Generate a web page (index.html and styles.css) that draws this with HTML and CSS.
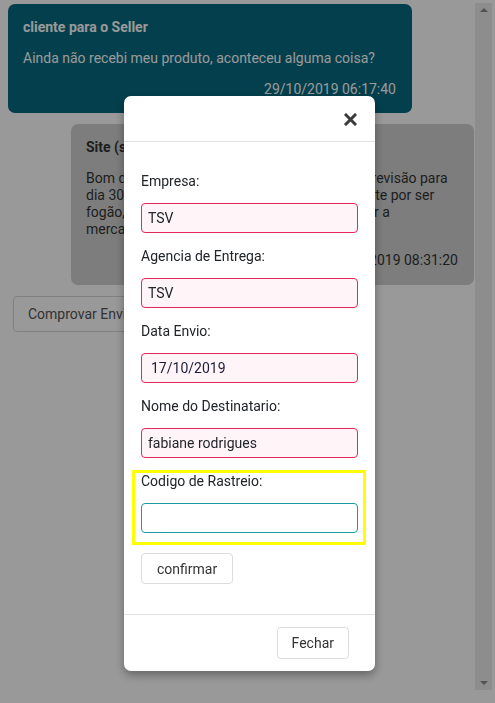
FILE: index.html
```html
<!DOCTYPE html>
<html lang="pt-BR">
<head>
  <meta charset="UTF-8">
  <meta name="viewport" content="width=device-width, initial-scale=1">
  <title>Mensagens do pedido</title>
  <link rel="stylesheet" href="styles.css">
</head>
<body>
  <div class="tela">
    <div class="chat">
      <div class="msg msg-cliente">
        <div class="msg-autor">cliente para o Seller</div>
        <p class="msg-texto">Ainda não recebi meu produto, aconteceu alguma coisa?</p>
        <div class="msg-data">29/10/2019 06:17:40</div>
      </div>

      <div class="msg msg-site">
        <div class="msg-autor">Site (seller)</div>
        <p class="msg-texto">Bom dia, o seu pedido já está com a data de previsão para<br>
          dia 30/10/2019, e a entrega é um tanto diferente por ser<br>
          fogão, pedimos que aguarde mais para receber a<br>
          mercadoria.</p>
        <div class="msg-data">30/10/2019 08:31:20</div>
      </div>

      <button class="btn-comprovar">Comprovar Envio</button>
    </div>

    <!-- barra de rolagem da lista -->
    <div class="scroll-track">
      <span class="seta seta-cima"></span>
      <span class="seta seta-baixo"></span>
    </div>
  </div>

  <!-- fundo escuro do modal -->
  <div class="backdrop"></div>

  <div class="modal">
    <div class="modal-header">
      <button class="btn-close" title="Fechar">
        <svg width="13" height="13" viewBox="0 0 13 13">
          <path d="M2 2 L11 11 M11 2 L2 11" stroke="#3b3b3b" stroke-width="3" stroke-linecap="square"/>
        </svg>
      </button>
    </div>

    <div class="modal-body">
      <div class="form-group">
        <label for="empresa">Empresa:</label>
        <input type="text" id="empresa" class="campo invalido" value="TSV">
      </div>
      <div class="form-group">
        <label for="agencia">Agencia de Entrega:</label>
        <input type="text" id="agencia" class="campo invalido" value="TSV">
      </div>
      <div class="form-group">
        <label for="data-envio">Data Envio:</label>
        <input type="text" id="data-envio" class="campo invalido campo-data" value="17/10/2019">
      </div>
      <div class="form-group">
        <label for="destinatario">Nome do Destinatario:</label>
        <input type="text" id="destinatario" class="campo invalido" value="fabiane rodrigues">
      </div>
      <div class="form-group destaque">
        <label for="rastreio">Codigo de Rastreio:</label>
        <input type="text" id="rastreio" class="campo foco">
      </div>

      <button class="btn-confirmar">confirmar</button>
    </div>

    <div class="modal-footer">
      <button class="btn-fechar">Fechar</button>
    </div>
  </div>
</body>
</html>
```

FILE: styles.css
```css
body {
  margin: 0;
  font-family: Roboto, "Liberation Sans", Arial, sans-serif;
  font-size: 14px;
  color: #212529;
  background-color: #fff;
}

.tela {
  display: flex;
  padding-top: 3px;
}

.chat {
  width: 475px;
  height: 687px;
  padding: 1px 1px 0 8px;
  box-sizing: border-box;
  overflow: hidden;
}

.scroll-track {
  width: 17px;
  height: 687px;
  background-color: #ebebeb;
  display: flex;
  flex-direction: column;
  justify-content: space-between;
  align-items: center;
  padding: 5px 0 5px;
  box-sizing: border-box;
}

.seta {
  width: 0;
  height: 0;
  border-left: 4px solid transparent;
  border-right: 4px solid transparent;
}

.seta-cima {
  border-bottom: 4px solid #8a8a8a;
}

.seta-baixo {
  border-top: 4px solid #8a8a8a;
}

.msg {
  width: 404px;
  box-sizing: border-box;
  padding: 15px 16px 15px 15px;
  border-radius: 7px;
  line-height: 17px;
  margin-bottom: 11px;
}

.msg-cliente {
  background-color: #056a80;
  color: #fff;
}

.msg-site {
  background-color: #d1d1d1;
  color: #333;
  margin-left: auto;
  width: 403px;
  padding-bottom: 16px;
}

.msg-autor {
  font-weight: bold;
}

.msg-texto {
  margin: 14px 0 14px;
}

.msg-data {
  text-align: right;
}

.btn-comprovar {
  display: block;
  height: 36px;
  margin: 5px 0 0 5px;
  padding: 0 14px;
  font-family: inherit;
  font-size: 14px;
  color: #555;
  background: #fff;
  border: 1px solid #d6d6d6;
  border-radius: 4px;
}

.backdrop {
  position: fixed;
  inset: 0;
  background-color: rgba(0, 0, 0, 0.4);
}

.modal {
  position: fixed;
  top: 96px;
  left: 124px;
  width: 251px;
  background: #fff;
  border-radius: 7px;
  box-shadow: 0 4px 10px rgba(0, 0, 0, 0.35);
}

.modal-header {
  height: 45px;
  border-bottom: 1px solid #dee2e6;
  display: flex;
  justify-content: flex-end;
  align-items: center;
  padding: 0 18px 0 0;
}

.btn-close {
  background: none;
  border: none;
  padding: 0;
  width: 13px;
  height: 13px;
  margin-top: 1px;
  cursor: pointer;
}

.btn-close svg {
  display: block;
}

.modal-body {
  padding: 29px 17px 30px;
}

.form-group {
  margin-bottom: 13px;
}

.form-group label {
  display: block;
  line-height: 20px;
  margin-bottom: 12px;
}

.campo {
  display: block;
  width: 100%;
  height: 30px;
  box-sizing: border-box;
  padding: 0 6px;
  font-family: inherit;
  font-size: 14px;
  color: #212529;
  border: 1px solid #ccc;
  border-radius: 4px;
  background: #fff;
  outline: none;
}

.campo.invalido {
  border-color: #e5285a;
  background-color: #fff5f8;
}

.campo-data {
  padding-left: 9px;
  color: #1c1c3a;
}

.campo.foco {
  border-color: #1b9aa0;
}

.destaque {
  position: relative;
  margin-bottom: 20px;
}

/* marcação amarela em volta do campo */
.destaque::after {
  content: "";
  position: absolute;
  left: -9px;
  right: -8px;
  top: -1px;
  bottom: -12px;
  border: 3px solid #ffff00;
  pointer-events: none;
}

.btn-confirmar,
.btn-fechar {
  font-family: inherit;
  font-size: 14px;
  color: #333;
  background: #fff;
  border: 1px solid #dcdcdc;
  border-radius: 4px;
  cursor: pointer;
}

.btn-confirmar {
  height: 31px;
  padding: 0 15px;
}

.modal-footer {
  border-top: 1px solid #dee2e6;
  padding: 12px 26px 12px 0;
  display: flex;
  justify-content: flex-end;
}

.btn-fechar {
  height: 32px;
  padding: 0 14px;
}
```
